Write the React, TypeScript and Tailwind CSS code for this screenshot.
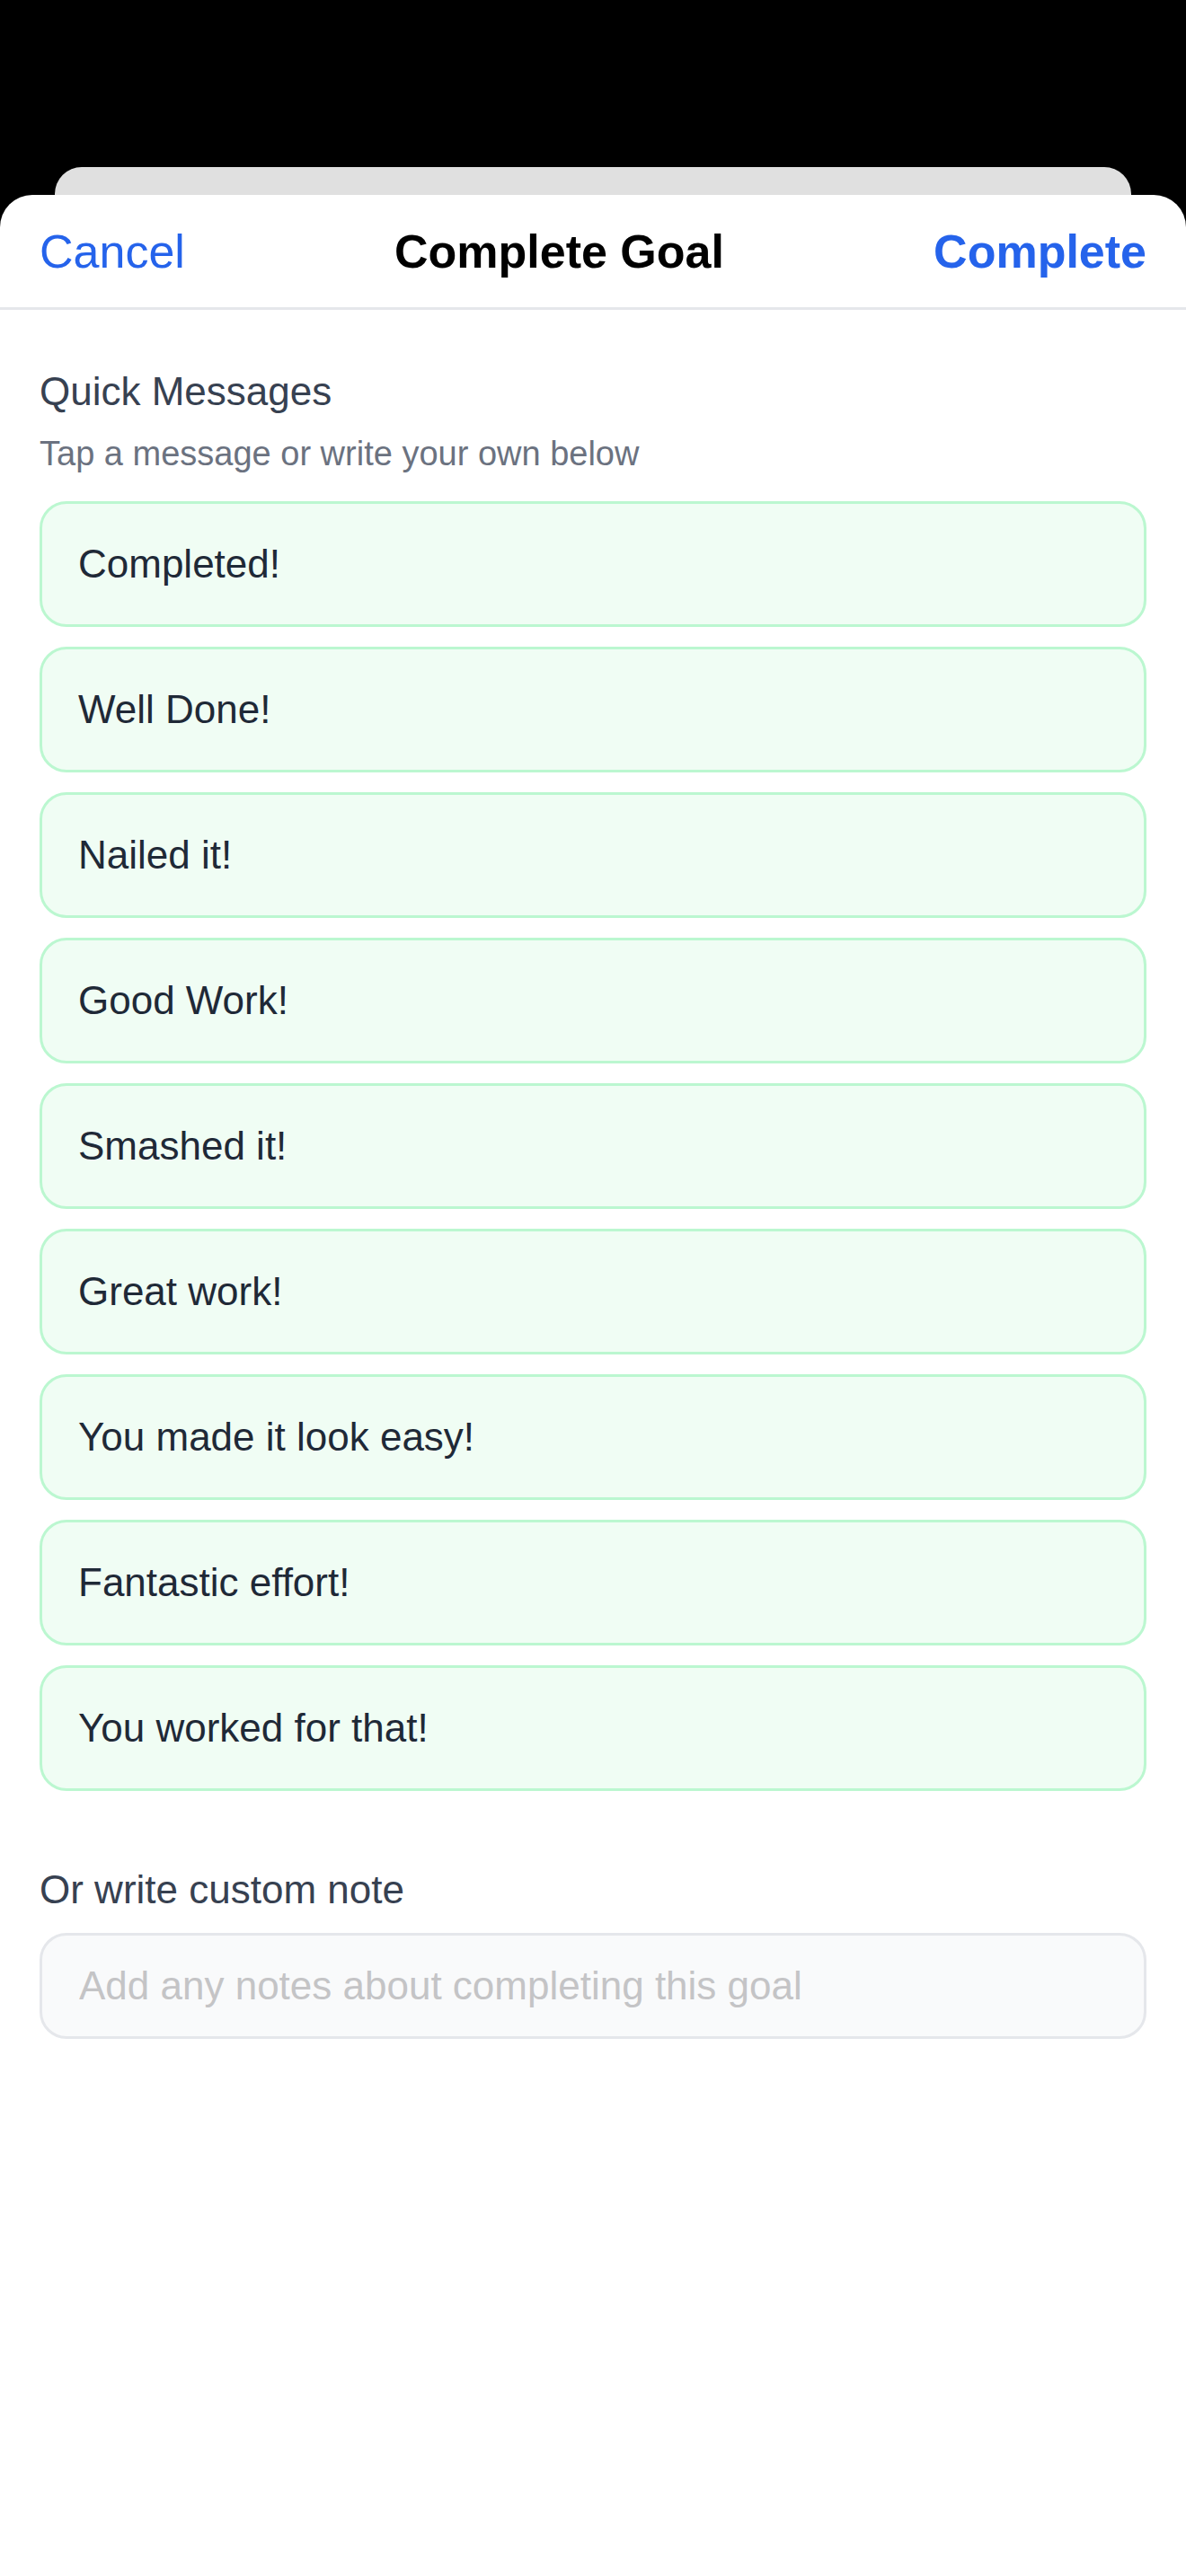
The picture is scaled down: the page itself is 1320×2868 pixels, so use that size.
import React from "react";

const messages = [
  "Completed!",
  "Well Done!",
  "Nailed it!",
  "Good Work!",
  "Smashed it!",
  "Great work!",
  "You made it look easy!",
  "Fantastic effort!",
  "You worked for that!",
];

export default function App() {
  return (
    <div className="min-h-[2868px] bg-black flex flex-col font-['Liberation_Sans',Arial,sans-serif]">
      <div className="h-[186px] shrink-0" />
      <div className="mx-[61px] h-[31px] shrink-0 rounded-t-[30px] bg-[#e0e0e0]" />
      <div className="flex-1 bg-white rounded-t-[36px] flex flex-col">
        <div className="h-[128px] px-[44px] flex items-center justify-between border-b-[3px] border-[#e5e7eb]">
          <button className="text-[52px] leading-[60px] text-[#2563eb]">Cancel</button>
          <div className="text-[52px] leading-[60px] font-bold text-black">Complete Goal</div>
          <button className="text-[52px] leading-[60px] font-bold text-[#2563eb]">Complete</button>
        </div>
        <div className="px-[44px] pt-[65px] flex flex-col">
          <div className="text-[44px] leading-[52px] font-medium text-[#374151]">Quick Messages</div>
          <div className="mt-[20px] text-[38px] leading-[46px] text-[#6b7280]">
            Tap a message or write your own below
          </div>
          <div className="mt-[30px] flex flex-col gap-[22px]">
            {messages.map((m) => (
              <button
                key={m}
                className="h-[140px] w-full flex items-center pl-[40px] text-left rounded-[30px] border-[3px] border-[#bbf7d0] bg-[#f0fdf4] text-[44px] leading-[52px] text-[#1f2937]"
              >
                {m}
              </button>
            ))}
          </div>
          <div className="mt-[84px] text-[44px] leading-[52px] font-medium text-[#374151]">
            Or write custom note
          </div>
          <input
            className="mt-[22px] h-[118px] w-full rounded-[30px] border-[3px] border-[#e5e7eb] bg-[#f9fafb] pl-[41px] text-[44px] text-[#1f2937] placeholder:text-[#c4c4c6] outline-none font-['Liberation_Sans',Arial,sans-serif]"
            placeholder="Add any notes about completing this goal"
          />
        </div>
      </div>
    </div>
  );
}
